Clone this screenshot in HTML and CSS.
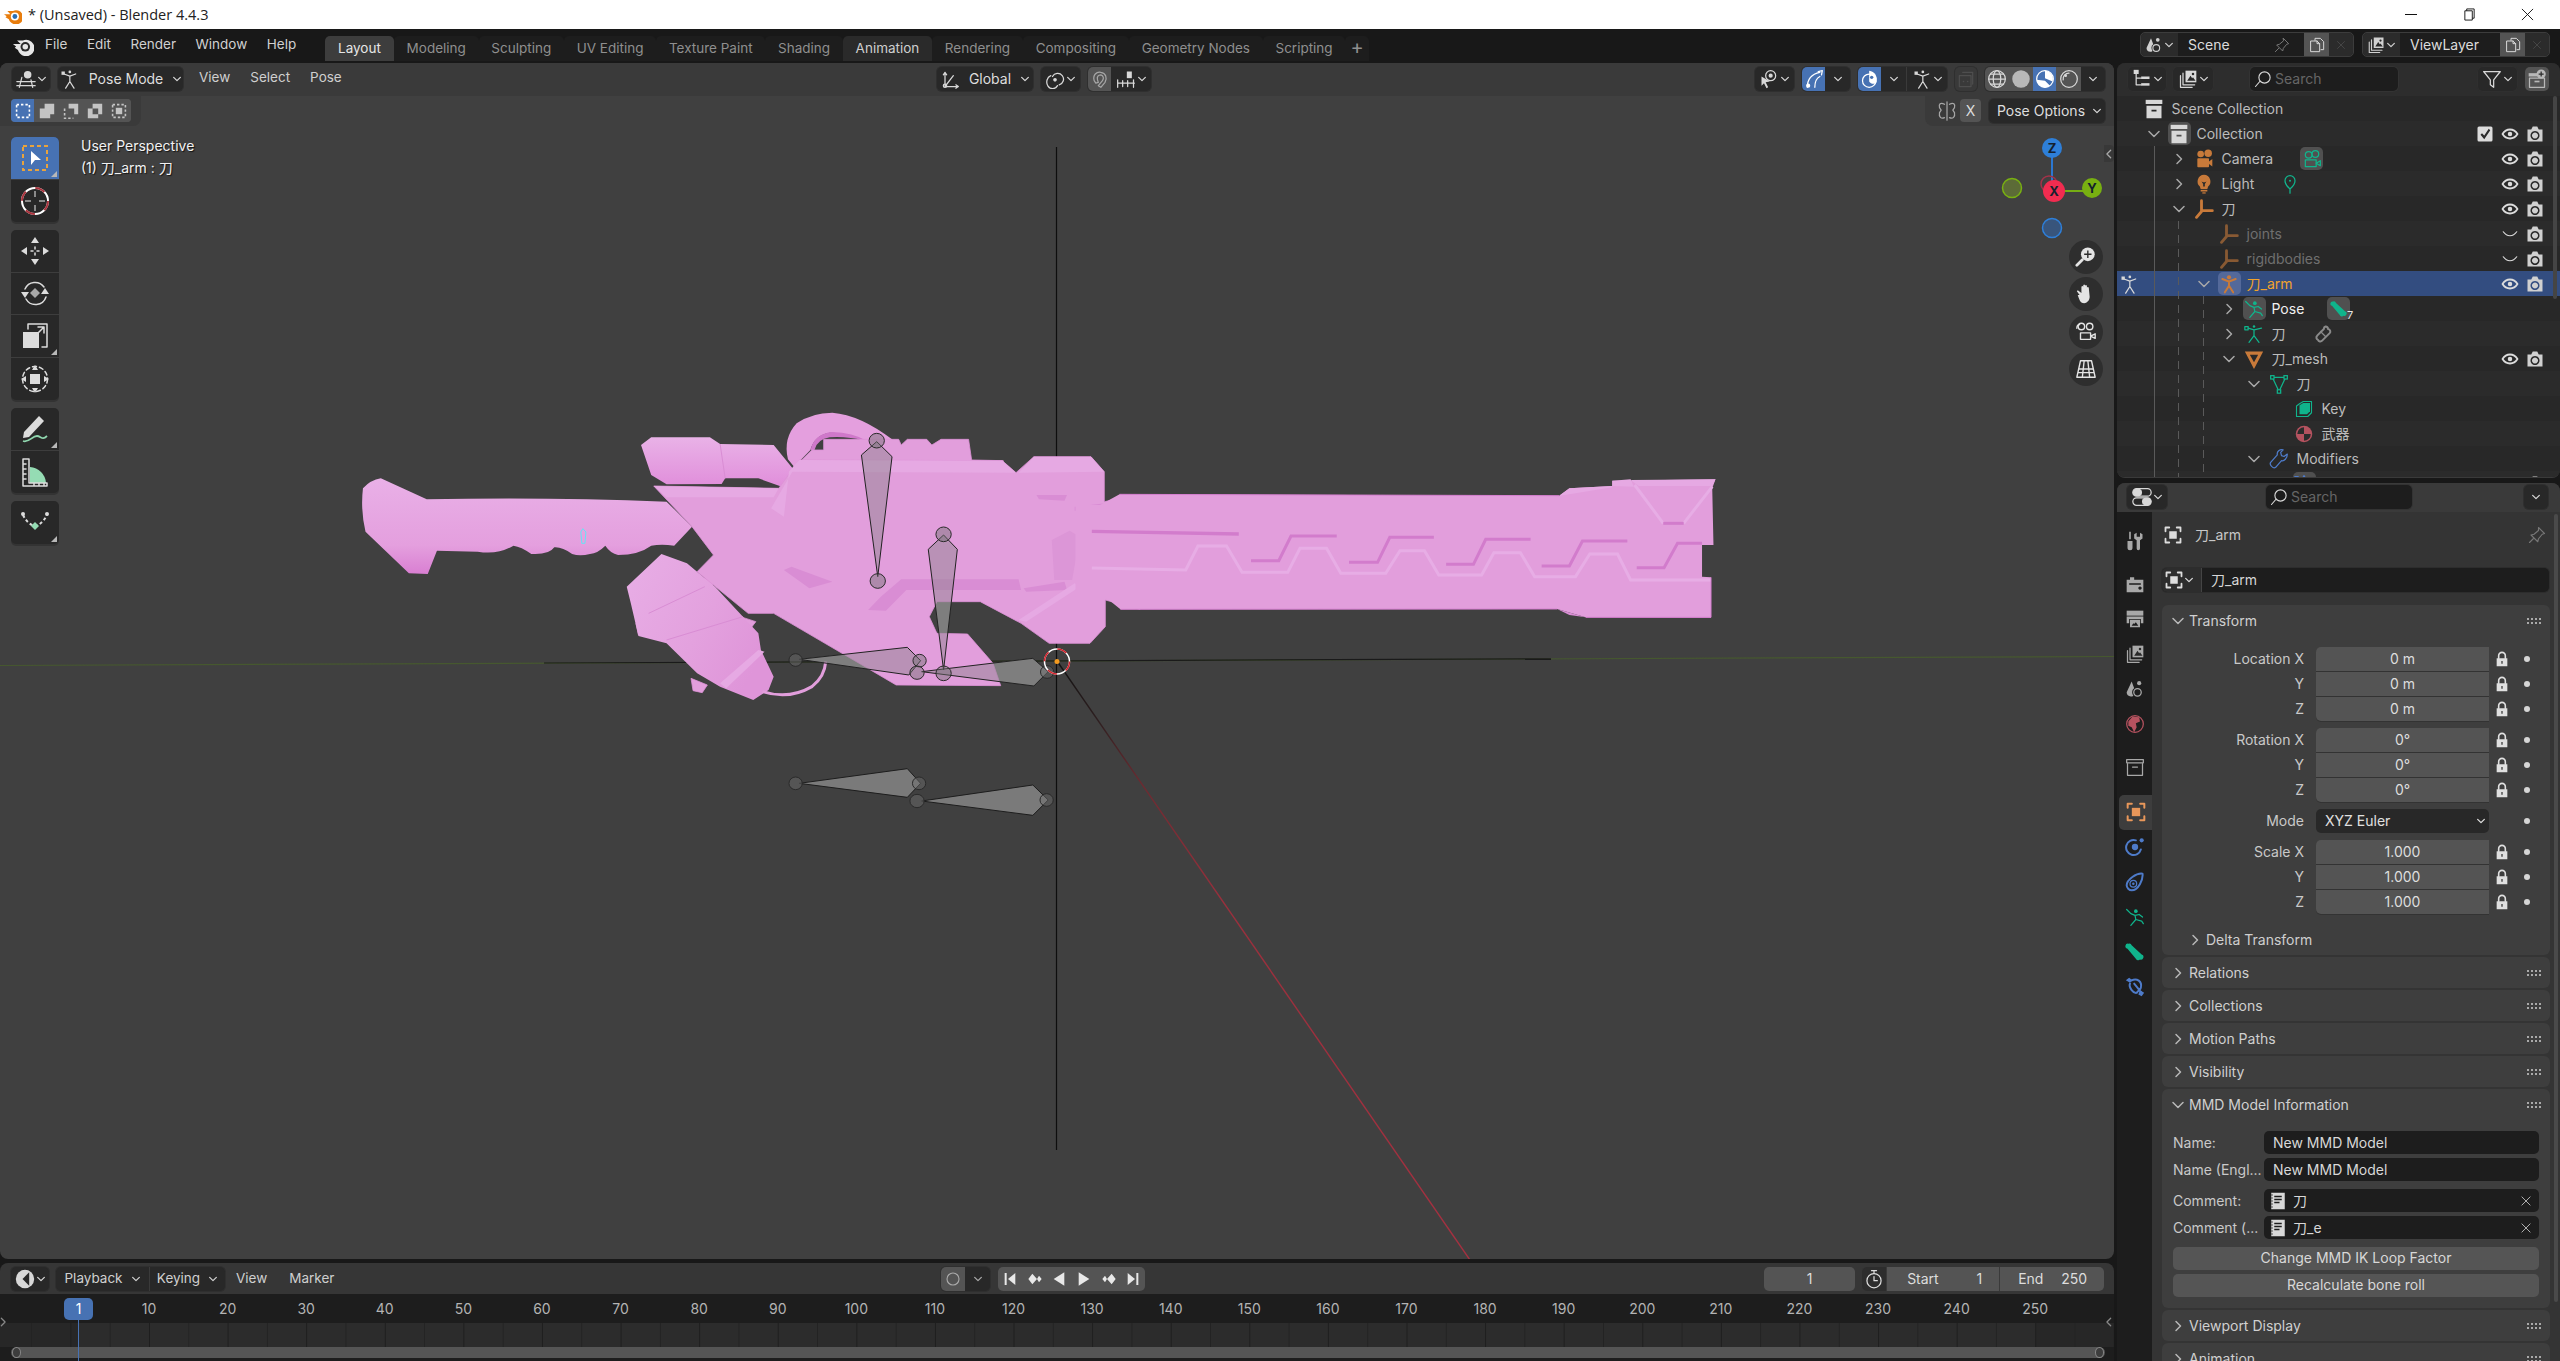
FILE: index.html
```html
<!DOCTYPE html>
<html lang="en">
<head>
<meta charset="utf-8">
<title>Blender 4.4.3</title>
<link rel="stylesheet" href="styles.css">
</head>
<body>
<svg class="sprite" aria-hidden="true">
<symbol id="logo" viewBox="0 0 24 24"><path class="f" d="M1 11h8.500L5.500 7h6.500a9 9 0 1 1-3 14.500 8 8 0 0 1-2.500-4L3 15l1.500-1.500z"/><circle class="cut" cx="14.500" cy="14" r="5.200"/><circle class="f" cx="14.500" cy="14" r="3"/></symbol>
<symbol id="tlogo" viewBox="0 0 24 24"><path class="o" d="M0 11h8.500L4.500 6.500h7.500a9.500 9.500 0 1 1-3 15 8 8 0 0 1-2.500-4L2 15l1.500-1.500z"/><circle class="w" cx="14.500" cy="14" r="5.400"/><circle class="b" cx="14.500" cy="14" r="3.200"/></symbol>
<symbol id="chd" viewBox="0 0 12 12"><path class="s" d="M2 4l4 4 4-4"/></symbol>
<symbol id="chr" viewBox="0 0 12 12"><path class="s" d="M4 1.500l4.500 4.500-4.500 4.500"/></symbol>
<symbol id="chdl" viewBox="0 0 12 12"><path class="s" d="M1 3.500l5 5 5-5"/></symbol>
<symbol id="v3d" viewBox="0 0 24 24"><circle class="f" cx="14" cy="7" r="4.500"/><path class="s" d="M7 10L4 22M18 13l2 9M1 15h22M1 20h22"/></symbol>
<symbol id="man" viewBox="0 0 24 24"><rect class="f" x="3" y="3" width="4" height="4"/><circle class="f" cx="13" cy="3.500" r="1.600"/><path class="s" d="M6 6l7 2.500 7-2.500M13 8.500V15M13 15l-5 8M13 15l5 8"/></symbol>
<symbol id="mnew" viewBox="0 0 20 20"><rect class="sd" x="2" y="2" width="16" height="16"/></symbol>
<symbol id="munion" viewBox="0 0 20 20"><path class="f" d="M7 1h12v13h-5v5H1V7h6z"/></symbol>
<symbol id="msub" viewBox="0 0 20 20"><path class="f" d="M7 1h12v13h-5V7H7z"/><path class="sd" d="M2 7v12h11"/></symbol>
<symbol id="mdiff" viewBox="0 0 20 20"><path class="f fe" d="M7 1h12v13h-5v5H1V7h6zM7 7v7h7V7z"/></symbol>
<symbol id="mint" viewBox="0 0 20 20"><rect class="sd" x="2" y="2" width="16" height="16"/><rect class="f" x="6" y="6" width="8" height="8"/></symbol>
<symbol id="global" viewBox="0 0 24 24"><path class="s" d="M6 21V4M4 7l2-3 2 3M6 21h16M19 19l3 2-3 2M6 21L16 8"/><circle class="s" cx="6" cy="20" r="2"/></symbol>
<symbol id="prop" viewBox="0 0 24 24"><path class="s" d="M9 9a7 7 0 1 1 8 10M7 8a7 8 0 1 0 8 12"/><circle class="f" cx="12" cy="13" r="2.200"/></symbol>
<symbol id="magnet" viewBox="0 0 24 24"><path class="s" d="M5 14c-2-7 3-11 8-10 6 1 8 7 5 12l-5 6-3-2 5-6c2-3 1-6-2-7-3 0-5 2-4 6l1 3-3 1z"/></symbol>
<symbol id="snap" viewBox="0 0 24 24"><rect class="f" x="13" y="3" width="6" height="8"/><path class="s" d="M2 13v9M2 17h20M8 14v7M14 14v7M21 13v9"/></symbol>
<symbol id="objgz" viewBox="0 0 24 24"><circle class="s" cx="14" cy="8" r="6"/><circle class="f" cx="14" cy="8" r="2.500"/><path class="f" d="M3 9l10 6-5 1 3 6-2 1-3-6-3 3z"/></symbol>
<symbol id="gizmo" viewBox="0 0 24 24"><path class="s" d="M4 22c0-9 5-16 15-18M13 22c0-7 2-11 6-13M17 3l5-1-1 5"/><circle class="f" cx="5" cy="20" r="2.500"/></symbol>
<symbol id="overlay" viewBox="0 0 24 24"><circle class="s" cx="11" cy="14" r="8"/><path class="f" d="M11 2a11 11 0 0 1 9 14c-3 3-7 2-9-1z"/><circle class="cutb" cx="14" cy="10" r="2"/></symbol>
<symbol id="xray" viewBox="0 0 24 24"><path class="s" d="M8 4h12v14M4 8h14v13H4z"/><circle class="f" cx="9" cy="15" r="1"/><circle class="f" cx="14" cy="15" r="1"/></symbol>
<symbol id="wire" viewBox="0 0 24 24"><circle class="s" cx="12" cy="12" r="10"/><ellipse class="s" cx="12" cy="12" rx="4.500" ry="10"/><path class="s" d="M2 12h20M4 6h16M4 18h16"/></symbol>
<symbol id="solid" viewBox="0 0 24 24"><circle class="f" cx="12" cy="12" r="10.500"/></symbol>
<symbol id="mat" viewBox="0 0 24 24"><circle class="s" cx="12" cy="12" r="10"/><path class="f" d="M12 2a10 10 0 0 1 9 13l-9-4z"/><path class="f" d="M2 13l10 1 6 6a10 10 0 0 1-16-7z"/></symbol>
<symbol id="rend" viewBox="0 0 24 24"><circle class="s" cx="12" cy="12" r="10"/><path class="s" d="M5 13a7 7 0 0 1 7-8"/><circle class="f" cx="8" cy="8" r="1.600"/></symbol>
<symbol id="zoomi" viewBox="0 0 24 24"><circle class="f" cx="14" cy="9" r="7.500"/><path class="ln" d="M14 5v8M10 9h8"/><path class="sb" d="M8 15l-6 6"/></symbol>
<symbol id="hand" viewBox="0 0 24 24"><path class="f" d="M5 13L2 9l1-1 4 3V4a1.200 1.200 0 0 1 2 0v6V2.500a1.200 1.200 0 0 1 2 0V10V3a1.200 1.200 0 0 1 2 0v7V5a1.200 1.200 0 0 1 2 0l1 10c0 4-3 7-6 7-4 0-5-3-7-9z"/></symbol>
<symbol id="camv" viewBox="0 0 24 24"><circle class="s" cx="7" cy="6" r="3.500"/><circle class="s" cx="16" cy="6" r="3.500"/><path class="s" d="M2 8c0-2 1-4 3-4M6 13h11v7H6zM22 14v5l-5-2.500z"/></symbol>
<symbol id="gridv" viewBox="0 0 24 24"><path class="s" d="M6 3h12l4 18H2zM4 12h16M3 16h18M10 3l-2 18M14 3l2 18"/></symbol>
<symbol id="tsel" viewBox="0 0 30 30"><rect class="sdo" x="3" y="3" width="24" height="24"/><path class="f" d="M11 8l10 9h-6l-4 5z"/></symbol>
<symbol id="tcur" viewBox="0 0 30 30"><circle class="rw" cx="15" cy="15" r="13"/><circle class="rr" cx="15" cy="15" r="13"/><path class="sg" d="M15 5v6M15 19v6M5 15h6M19 15h6"/></symbol>
<symbol id="tmov" viewBox="0 0 30 30"><path class="f" d="M15 1l4 6h-8zM15 29l-4-6h8zM1 15l6-4v8zM29 15l-6 4v-8z"/><path class="s" d="M15 11v2M15 17v2M11 15h2M17 15h2"/></symbol>
<symbol id="trot" viewBox="0 0 30 30"><path class="s" d="M5 11a11 11 0 0 1 19-2M26 19a11 11 0 0 1-20 2"/><path class="f" d="M1 14h8l-4 6zM29 16h-8l4-6z"/><path class="fg" d="M15 10l5 5-5 5-5-5z"/></symbol>
<symbol id="tscl" viewBox="0 0 30 30"><rect class="f" x="3" y="11" width="16" height="16"/><path class="s" d="M8 8V3h19v23h-5M14 16l10-10M18 6h6v6"/></symbol>
<symbol id="txf" viewBox="0 0 30 30"><rect class="f" x="10" y="10" width="10" height="10"/><circle class="s d2" cx="15" cy="15" r="12.500"/><path class="f" d="M15 1l3 5h-6zM15 29l-3-5h6zM1 15l5-3v6zM29 15l-5 3v-6z"/></symbol>
<symbol id="tann" viewBox="0 0 30 30"><path class="f" d="M4 18L19 2l5 5L9 23l-6 1z"/><path class="sgr" d="M3 27c6 2 9-5 14-5 4 0 5 5 10 0"/></symbol>
<symbol id="tmea" viewBox="0 0 30 30"><path class="fgr" d="M10 10a17 17 0 0 1 16 16H10z"/><path class="s" d="M3 2h6v24h18v3H3zM3 7h3M3 12h3M3 17h3M3 22h3M14 29v-3M19 29v-3M24 29v-3"/></symbol>
<symbol id="tbend" viewBox="0 0 30 30"><path class="sd" d="M3 8c3 6 7 10 12 11 5-1 9-5 12-11"/><circle class="f" cx="3" cy="7" r="2"/><circle class="f" cx="27" cy="7" r="2"/><path class="fgr" d="M15 15l4 4-4 4-4-4z"/></symbol>
<symbol id="scene" viewBox="0 0 24 24"><path class="f" d="M8 3L2 16c0 3 2 5 5 5 2 0 3-1 3-1-2-3-2-7 1-9z"/><circle class="s" cx="15" cy="16" r="4.500"/><circle class="f" cx="17" cy="5" r="2.500"/></symbol>
<symbol id="vlayer" viewBox="0 0 24 24"><path class="s" d="M3 8v14h14M6 5v14h14"/><rect class="f" x="9" y="2" width="13" height="14"/><path class="cutp" d="M11 14l4-6 2 3 1-1 3 4z"/><circle class="cut" cx="18" cy="6" r="1.500"/></symbol>
<symbol id="copy" viewBox="0 0 24 24"><path class="s" d="M9 5V2h8l5 5v12h-4M3 6h9l4 4v12H3zM12 6v4h4"/></symbol>
<symbol id="xx" viewBox="0 0 24 24"><path class="s" d="M5 5l14 14M19 5L5 19"/></symbol>
<symbol id="pin" viewBox="0 0 24 24"><path class="s" d="M14 2l8 8-3 1-5 6-1 4-9-9 4-1 6-5zM7 17l-5 5"/></symbol>
<symbol id="dmode" viewBox="0 0 24 24"><rect class="f" x="2" y="1" width="6" height="5"/><rect class="f" x="11" y="9" width="10" height="3"/><rect class="f" x="11" y="17" width="10" height="3"/><path class="s" d="M5 6v13h6M5 11h6"/></symbol>
<symbol id="search" viewBox="0 0 24 24"><circle class="s" cx="14" cy="10" r="7.500"/><path class="s" d="M8 15l-6 7"/></symbol>
<symbol id="filter" viewBox="0 0 24 24"><path class="s" d="M2 3h20l-8 10v9l-4-3v-6z"/></symbol>
<symbol id="newcol" viewBox="0 0 24 24"><path class="s" d="M3 11h18v11H3z"/><rect class="f" x="2" y="5" width="14" height="4"/><rect class="f" x="9" y="14" width="6" height="2"/><circle class="f" cx="17" cy="6" r="5.500"/><path class="ln" d="M17 3v6M14 6h6"/></symbol>
<symbol id="coll" viewBox="0 0 24 24"><rect class="f" x="2" y="1" width="20" height="5"/><path class="f fe" d="M3 8h18v15H3zM9 13v2h6v-2z"/></symbol>
<symbol id="camo" viewBox="0 0 24 24"><circle class="f" cx="8" cy="6" r="4"/><circle class="f" cx="17" cy="5" r="4.500"/><rect class="f" x="4" y="11" width="14" height="11" rx="1"/><path class="f" d="M22 12v9l-4-3v-3z"/></symbol>
<symbol id="camd" viewBox="0 0 24 24"><circle class="s" cx="8" cy="7" r="4"/><circle class="s" cx="16" cy="6" r="4"/><rect class="s" x="4" y="13" width="13" height="8"/><path class="s" d="M22 14v6l-5-3z"/></symbol>
<symbol id="bulb" viewBox="0 0 24 24"><path class="f fe" d="M12 1a8 8 0 0 1 5 14l-1 3H8l-1-3A8 8 0 0 1 12 1zM9 9l2 3v3h2v-3l2-3-2 1h-2z"/><rect class="f" x="8" y="19" width="8" height="2"/><rect class="f" x="10" y="22" width="4" height="1.500"/></symbol>
<symbol id="lightd" viewBox="0 0 24 24"><path class="s" d="M12 2a6 6 0 0 1 6 6c0 5-4 8-6 10-2-2-6-5-6-10a6 6 0 0 1 6-6zM12 18v5"/><circle class="f" cx="12" cy="8" r="1.200"/></symbol>
<symbol id="empty" viewBox="0 0 24 24"><path class="sth3" d="M9 2v13M9 15L3 22M9 14h13"/></symbol>
<symbol id="armo" viewBox="0 0 24 24"><circle class="f" cx="12" cy="4" r="2.500"/><path class="sth" d="M4 6l8 3 8-3M12 9v6M12 14l-5 8M12 14l5 8"/></symbol>
<symbol id="posed" viewBox="0 0 24 24"><circle class="f" cx="13" cy="5" r="2.200"/><path class="s" d="M2 3l5 5 5 2 5-1 4 3M12 10l1 5-6 7M13 15l7 2 2 3"/></symbol>
<symbol id="bone" viewBox="0 0 24 24"><path class="f" d="M4 2a3 3 0 0 1 4 2l12 11a3 3 0 1 1-2 6 3 3 0 0 1-5-1L3 8a3 3 0 0 1 1-6z"/></symbol>
<symbol id="bonel" viewBox="0 0 24 24"><path class="sth" d="M15 3a3 3 0 0 1 3 3 3 3 0 0 1 2 5l-9 9a3 3 0 0 1-5-1 3 3 0 0 1-1-5l8-8a3 3 0 0 1 2-3z"/><path class="s" d="M9 9l6 6"/></symbol>
<symbol id="armd" viewBox="0 0 24 24"><rect class="s" x="1" y="3" width="4" height="4"/><circle class="f" cx="12" cy="3" r="1.500"/><path class="s" d="M5 5l7 2 9-2M12 7v7M12 14l-6 8M12 14l6 8"/></symbol>
<symbol id="mesho" viewBox="0 0 24 24"><path class="f fe" d="M1 3h22L12 24zM7 7l5 9 5-9z"/></symbol>
<symbol id="meshd" viewBox="0 0 24 24"><path class="s" d="M4 4h16L12 21z"/><rect class="ff" x="2" y="2" width="4" height="4"/><rect class="ff" x="18" y="2" width="4" height="4"/><rect class="ff" x="10" y="19" width="4" height="4"/></symbol>
<symbol id="key" viewBox="0 0 24 24"><path class="s" d="M6 5l5-3h11v15l-5 5H2V8z"/><path class="f" d="M6 7l5-3h9v11l-4 4H6z"/></symbol>
<symbol id="mtl" viewBox="0 0 24 24"><circle class="f" cx="12" cy="12" r="11"/><path class="wd" d="M12 3v9H3a9 9 0 0 1 9-9zM12 12h9a9 9 0 0 1-9 9z"/></symbol>
<symbol id="wrench" viewBox="0 0 24 24"><path class="s" d="M22 6l-4 3-3-1-1-4 3-3c-4-1-8 2-7 6L2 16c-2 3 3 8 6 6l7-8c3 1 7-3 7-8z"/></symbol>
<symbol id="eye" viewBox="0 0 24 24"><path class="sth" d="M2 12c5-8 15-8 20 0-5 8-15 8-20 0z"/><circle class="f" cx="12" cy="12" r="3"/></symbol>
<symbol id="eyec" viewBox="0 0 24 24"><path class="s" d="M3 9c5 7 13 7 18 0"/></symbol>
<symbol id="rcam" viewBox="0 0 24 24"><path class="f fe" d="M2 6h5l2-4h6l2 4h5v16H2zM12 8a6 6 0 1 0 .01 0zM12 10a4 4 0 1 1-.01 0z"/></symbol>
<symbol id="chk" viewBox="0 0 24 24"><path class="f fe" d="M4 2h16a2 2 0 0 1 2 2v16a2 2 0 0 1-2 2H4a2 2 0 0 1-2-2V4a2 2 0 0 1 2-2zM17 5l-6 9-3-3-2 2 5 6 8-12z"/></symbol>
<symbol id="toggle" viewBox="0 0 24 24"><rect class="s" x="1" y="2" width="22" height="9" rx="4.500"/><rect class="f" x="1" y="2" width="11" height="9" rx="4.500"/><rect class="s" x="1" y="13" width="22" height="9" rx="4.500"/><rect class="f" x="12" y="13" width="11" height="9" rx="4.500"/></symbol>
<symbol id="tool" viewBox="0 0 24 24"><path class="f" d="M5 1h2v9H5zM3 12h6v8a3 3 0 0 1-6 0zM14 2v5h2V7h2V2l3 2v5l-3 2v10a2 2 0 0 1-4 0V11l-3-2V4z"/></symbol>
<symbol id="rendert" viewBox="0 0 24 24"><path class="f fe" d="M2 7h4V4h5v3h11v15H2zM5 11v2h14v-2zM18 15a2 2 0 1 0 .01 0z"/></symbol>
<symbol id="output" viewBox="0 0 24 24"><rect class="f" x="2" y="2" width="20" height="6"/><path class="f fe" d="M2 9h20v8h-3v-5H5v5H2zM6 13h12v9H6zM8 20h8l-3-4-2 2-1-1z"/></symbol>
<symbol id="world" viewBox="0 0 24 24"><circle class="s" cx="12" cy="12" r="10"/><path class="f" d="M4 9l5-6 8 1 1 5-5 2 1 5-3 6-3-6-4-2z"/></symbol>
<symbol id="colt" viewBox="0 0 24 24"><rect class="s" x="2" y="3" width="20" height="4"/><path class="s" d="M3 8v14h18V8M9 12h6"/></symbol>
<symbol id="obj" viewBox="0 0 24 24"><rect class="f" x="7" y="7" width="10" height="10"/><path class="sth" d="M2 7V2h5M17 2h5v5M22 17v5h-5M7 22H2v-5"/></symbol>
<symbol id="phys" viewBox="0 0 24 24"><path class="sth" d="M19 15a9 9 0 1 1-6-11"/><circle class="f" cx="12" cy="12" r="3.800"/><circle class="f" cx="20" cy="4" r="2.500"/></symbol>
<symbol id="cons" viewBox="0 0 24 24"><path class="sth" d="M2 16c0-7 12-15 19-14 1 7-5 20-13 20-3 0-6-3-6-6z"/><circle class="s" cx="10" cy="14" r="4"/><circle class="f" cx="10" cy="14" r="1.500"/></symbol>
<symbol id="bcons" viewBox="0 0 24 24"><path class="f" d="M1 4l4-3 4 3-3 3zM18 16l5 3-3 4-4-2z"/><path class="sth" d="M8 4c6-3 13 1 11 9 0 2-3 3-5 6-4 1-10-7-8-11M11 8l9 11"/></symbol>
<symbol id="lock" viewBox="0 0 24 24"><path class="f fe" d="M4 11h16v12H4zM11 15v4h2v-4z"/><path class="sth" d="M7 11V7a5 5 0 0 1 10 0v4"/></symbol>
<symbol id="note" viewBox="0 0 24 24"><path class="f fe" d="M3 1h18v22H3zM7 5v2h10V5zM7 9v2h10V9zM7 13v2h7v-2z"/><path class="ln" d="M3 4h2M3 8h2M3 12h2M3 16h2M3 20h2"/></symbol>
<symbol id="clockt" viewBox="0 0 24 24"><circle class="f" cx="12" cy="12" r="11"/><path class="cutp" d="M17 4L9 12l8 8z"/></symbol>
<symbol id="rec" viewBox="0 0 24 24"><circle class="s" cx="12" cy="12" r="8"/></symbol>
<symbol id="jstart" viewBox="0 0 24 24"><rect class="f" x="4" y="3" width="3" height="18"/><path class="f" d="M20 3v18L9 12z"/></symbol>
<symbol id="kprev" viewBox="0 0 24 24"><path class="f" d="M8 4l7 8-7 8-6-8zM18 7l4 5-4 5-3-5z"/></symbol>
<symbol id="pback" viewBox="0 0 24 24"><path class="f" d="M20 2v20L4 12z"/></symbol>
<symbol id="pplay" viewBox="0 0 24 24"><path class="f" d="M4 2v20l16-10z"/></symbol>
<symbol id="knext" viewBox="0 0 24 24"><path class="f" d="M16 4l-7 8 7 8 6-8zM6 7l-4 5 4 5 3-5z"/></symbol>
<symbol id="jend" viewBox="0 0 24 24"><rect class="f" x="17" y="3" width="3" height="18"/><path class="f" d="M4 3v18l11-9z"/></symbol>
<symbol id="watch" viewBox="0 0 24 24"><circle class="s" cx="12" cy="14" r="8.500"/><path class="s" d="M9 2h6M12 2v3M12 9v5h4"/></symbol>
<symbol id="mirror" viewBox="0 0 24 24"><path class="s" d="M12 1v22M9 4C4 1 2 4 3 8l2 3-2 3c-1 5 2 8 6 6M15 4c5-3 7 0 6 4l-2 3 2 3c1 5-2 8-6 6" /></symbol>
<symbol id="wmax" viewBox="0 0 14 14"><path class="s1" d="M4 3V1h8v10h-2M2 3h8v10H2z"/></symbol>
<symbol id="wclose" viewBox="0 0 14 14"><path class="s1" d="M1 1l12 12M13 1L1 13"/></symbol>
</svg>

<header class="titlebar">
  <svg class="ttl-logo"><use href="#tlogo"/></svg>
  <span class="ttl-text">* (Unsaved) - Blender 4.4.3</span>
  <div class="winctl">
    <span class="wbtn"><i class="wmin"></i></span>
    <span class="wbtn"><svg class="wic"><use href="#wmax"/></svg></span>
    <span class="wbtn"><svg class="wic"><use href="#wclose"/></svg></span>
  </div>
</header>

<div class="app">
  <nav class="topbar">
    <svg class="ic22 top-logo"><use href="#logo"/></svg>
    <div class="topmenu"><span>File</span><span>Edit</span><span>Render</span><span>Window</span><span>Help</span></div>
    <div class="tabs">
      <span class="tab on">Layout</span><span class="tab">Modeling</span><span class="tab">Sculpting</span><span class="tab">UV Editing</span><span class="tab">Texture Paint</span><span class="tab">Shading</span><span class="tab hov">Animation</span><span class="tab">Rendering</span><span class="tab">Compositing</span><span class="tab">Geometry Nodes</span><span class="tab">Scripting</span><span class="tab plus">+</span>
    </div>
    <div class="selectors">
      <div class="sel sel-scene">
        <span class="sel-ic"><svg class="ic18"><use href="#scene"/></svg><svg class="ic10"><use href="#chd"/></svg></span>
        <span class="sel-name">Scene</span><svg class="ic16 dim sel-pin"><use href="#pin"/></svg>
        <span class="sel-b"><svg class="ic16"><use href="#copy"/></svg></span><span class="sel-x"><svg class="ic12"><use href="#xx"/></svg></span>
      </div>
      <div class="sel sel-vl">
        <span class="sel-ic"><svg class="ic18"><use href="#vlayer"/></svg><svg class="ic10"><use href="#chd"/></svg></span>
        <span class="sel-name">ViewLayer</span>
        <span class="sel-b"><svg class="ic16"><use href="#copy"/></svg></span><span class="sel-x"><svg class="ic12"><use href="#xx"/></svg></span>
      </div>
    </div>
  </nav>

  <div class="workspace">
    <div class="leftcol">
      <main class="viewport">
        <svg class="scene3d" viewBox="0 63 2114 1196">
          <defs>
            <linearGradient id="redax" gradientUnits="userSpaceOnUse" x1="1057" y1="661" x2="1470" y2="1260"><stop offset="0" stop-color="#111"/><stop offset=".1" stop-color="#2e1f20"/><stop offset=".2" stop-color="#6a2a30"/><stop offset=".4" stop-color="#9a2f3c"/><stop offset="1" stop-color="#a63040"/></linearGradient>
            <linearGradient id="grip" x1="0" y1="0" x2="0" y2="1"><stop offset="0" stop-color="#e9b0e7"/><stop offset=".7" stop-color="#e49fde"/><stop offset="1" stop-color="#d97fd2"/></linearGradient>
            <linearGradient id="gtop" x1="0" y1="0" x2="0" y2="1"><stop offset="0" stop-color="#e9b2e7"/><stop offset="1" stop-color="#e08cda"/></linearGradient>
            <linearGradient id="can" x1="0" y1="0" x2="1" y2=".55"><stop offset="0" stop-color="#e8aee6"/><stop offset=".6" stop-color="#e3a1de"/><stop offset="1" stop-color="#df95d9"/></linearGradient>
          </defs>
          <path class="ax-g" d="M0 665.500L2114 656.500"/>
          <path class="ax-k" d="M544 663L1551 658.800"/>
          <path class="ax-r" d="M1057 661L1470 1260"/>
          <path class="ax-v" d="M1056.500 147V1150"/>
          <g class="z7">
            <polygon class="bs" points="900,778 1112,742 1138,782 1115,825"/>
            <polygon class="bs" points="1140,815 1358,775 1388,815 1360,858"/>
            <polygon class="bs" points="1183,405 1210,448 1183,810 1153,448"/>
          </g>
          <g class="z7">
            <path class="gripc" d="M878,178 Q868,115 895,70 Q925,38 965,38 Q1020,45 1082,118 L1090,140 1040,140 Q1010,100 960,98 Q930,105 922,150 L890,200z"/>
            <path class="ring2" d="M922 150Q930 100 965 96Q1005 98 1032 122Q990 108 960 112Q935 118 930 150z"/>
            <path class="pk-t" d="M590,135 610,112 725,112 745,132 850,135 895,220 880,268 820,235 755,235 748,252 640,253 610,225z"/>
            <path class="ln7" d="M745 132L755 235"/>
            <path class="pk" d="M948,150 948,118 1095,118 1100,135 1112,118 1150,118 1160,135 1178,118 1232,118 1238,180 1300,182 1300,200 920,200 905,180 925,150z"/>
            <path class="pk-g" d="M45,265 Q60,240 80,235 L170,298 Q400,290 640,305 L690,380 655,437 Q630,432 610,437 Q585,465 545,465 Q530,460 520,437 Q505,460 490,462 Q470,470 455,462 Q435,440 420,442 Q410,465 375,462 Q355,440 340,437 Q310,465 270,455 L190,452 172,522 135,520 50,395 Q40,330 45,265z"/>
            <path class="pk" d="M580,670 610,690 605,710 585,705z"/>
            <path class="pk" d="M700,530 735,545 720,570 705,545z"/>
            <path class="pk" d="M785,650 815,665 800,695 785,675z"/>
            <path class="pk" d="M688,835 720,855 710,878 692,872z"/>
            <path class="pk-c" d="M562,560 630,462 680,490 735,560 820,700 825,750 850,830 840,870 810,900 745,860 700,820 640,730 585,708 570,610z"/>
            <path class="ln7" d="M605 640L715 560M640 720L790 650"/>
            <path class="lt" d="M745 850L820 750 832 755 757 865z"/>
            <path class="wire" d="M828 875Q880 900 925 860Q950 830 952 785"/>
            <path class="pk" d="M615,258 860,265 900,180 1298,182 1325,218 1360,170 1472,170 1498,215 1498,305 1568,285 1568,628 1500,600 1500,680 1470,730 1390,730 1335,670 1255,605 1170,605 1155,650 1170,700 1230,702 1280,790 1295,857 1090,855 1040,810 850,640 800,640 700,515 732,465 690,380z"/>
            <path class="lt" d="M900,180 1298,182 1325,218 880,215z"/>
            <path class="lt" d="M900,180 880,215 870,350 845,325z"/>
            <path class="lt" d="M615,258 860,265 850,292 640,292z"/>
            <path class="dk" d="M1060,590 1100,538 1330,538 1335,570 1110,570 1070,632 1035,630z"/>
            <path class="dk" d="M1340,565 1420,545 1425,570 1345,575z"/>
            <path class="dk3" d="M1395,420 1430,392 1450,410 1435,540 1400,540z"/>
            <path class="dk" d="M885,500 965,545 920,565 870,510z"/>
            <path class="lt" d="M1360,170 1472,170 1498,215 1330,218z"/>
            <path class="dk" d="M1365,285 1425,285 1420,302 1370,298z"/>
            <path class="dk" d="M1440,320 1500,310 1475,335 1440,332z"/>
            <path class="lt" d="M1330,660 1440,550 1450,560 1345,665z"/>
          </g>
          <g class="z8">
            <path class="pk-b" d="M0,195 48,163 1125,167 1150,145 1255,138 1255,122 1508,118 1500,145 1503,315 1475,315 1475,410 1497,412 1497,533 1190,532 1120,507 50,508 12,470 -60,470 -60,195z"/>
            <path class="lt" d="M1300,120 1508,118 1500,138 1320,138z"/>
            <path class="lt" d="M1255,122 1300,118 1308,140 1255,138z"/>
            <path class="lt" d="M1125,167 1150,145 1255,138 1255,142 1165,160z"/>
            <path class="str-l" d="M1310 135L1380 250M1430 250L1500 140"/>
            <path class="str-d" d="M1380 250H1430"/>
            <path class="str-d2" d="M-20 274L340 282"/>
            <path class="str-d" d="M370 362H438L468 288H580M610 367H680L710 292H818M848 373H915L945 298H1055M1082 378H1150L1182 303H1292M1315 383H1382L1415 310H1475"/>
            <path class="str-l" d="M-20 384L210 390 240 318H310L348 397H460L490 325H555L590 400H700L735 332H795L830 405H935L965 338H1030L1065 410H1165L1200 342H1268L1300 420H1497"/>
            <path class="edge" d="M48 163L1125 167M50 508L1120 507M1190 532H1497V412"/>
            <path class="dk" d="M1120,507 1190,532 1150,525z"/>
          </g>
          <g class="z7">
            <polygon class="bo" points="1052,125 1082,170 1054,530 1022,165"/>
            <ellipse class="jt" cx="1052" cy="122" rx="15" ry="22"/><ellipse class="jt" cx="1054" cy="543" rx="15" ry="22"/>
            <polygon class="bo" points="1183,405 1210,448 1183,810 1153,448"/>
            <ellipse class="jt" cx="1183" cy="403" rx="15" ry="22"/>
            <polygon class="bo" points="900,778 1112,742 1138,782 1115,825"/>
            <ellipse class="jt" cx="893" cy="780" rx="13" ry="19"/><ellipse class="jt" cx="1136" cy="782" rx="13" ry="19"/>
            <polygon class="bo" points="1140,815 1358,775 1388,815 1360,858"/>
            <ellipse class="jt" cx="1131" cy="818" rx="14" ry="20"/><ellipse class="jt" cx="1183" cy="820" rx="15" ry="22"/><ellipse class="jt" cx="1386" cy="816" rx="13" ry="19"/>
            <polygon class="bs2" points="900,1150 1112,1106 1138,1150 1112,1192"/>
            <ellipse class="jt" cx="893" cy="1150" rx="13" ry="19"/><ellipse class="jt" cx="1135" cy="1150" rx="13" ry="19"/>
            <polygon class="bs2" points="1140,1203 1358,1155 1388,1200 1358,1246"/>
            <ellipse class="jt" cx="1131" cy="1203" rx="14" ry="20"/><ellipse class="jt" cx="1385" cy="1200" rx="13" ry="19"/>
            <path class="cy" d="M476 386L482 396 480 430H474L472 396z"/>
          </g>
          <circle class="cur-w" cx="1057" cy="661.500" r="12.500"/>
          <circle class="cur-r" cx="1057" cy="661.500" r="12.500"/>
          <circle class="cur-o" cx="1057" cy="661.500" r="2.500"/>
          <g class="giz">
            <path class="gl-b" d="M2052 148V188"/><path class="gl-g" d="M2054 191H2092"/>
            <circle class="g-nx" cx="2049" cy="184" r="8"/>
            <circle class="g-ny" cx="2012" cy="188" r="9.500"/>
            <circle class="g-nz" cx="2052" cy="228" r="9.500"/>
            <circle class="g-z" cx="2052" cy="148" r="10"/><text class="gt" x="2052" y="153">Z</text>
            <circle class="g-y" cx="2092" cy="188" r="10"/><text class="gt" x="2092" y="193">Y</text>
            <circle class="g-x" cx="2054" cy="191" r="11"/><text class="gt" x="2054" y="196">X</text>
          </g>
        </svg>

        <div class="vhead">
          <div class="vh-left">
            <span class="btn w38"><svg class="ic20"><use href="#v3d"/></svg><svg class="ic10"><use href="#chd"/></svg></span>
            <span class="btn wmode"><svg class="ic20"><use href="#man"/></svg><span class="btxt">Pose Mode</span><svg class="ic10"><use href="#chd"/></svg></span>
            <div class="menu"><span>View</span><span>Select</span><span>Pose</span></div>
          </div>
          <div class="vh-center">
            <span class="btn wglob"><svg class="ic20"><use href="#global"/></svg><span class="btxt">Global</span><svg class="ic10"><use href="#chd"/></svg></span>
            <span class="btn wprop"><svg class="ic20"><use href="#prop"/></svg><svg class="ic10"><use href="#chd"/></svg></span>
            <span class="btn wsnap"><span class="seg lit w23"><svg class="ic20 dim2"><use href="#magnet"/></svg></span><span class="seg w40"><svg class="ic20"><use href="#snap"/></svg><svg class="ic10"><use href="#chd"/></svg></span></span>
          </div>
          <div class="vh-right">
            <span class="btn w39"><svg class="ic20"><use href="#objgz"/></svg><svg class="ic10"><use href="#chd"/></svg></span>
            <span class="btn wgz"><span class="seg act w23"><svg class="ic20"><use href="#gizmo"/></svg></span><span class="seg w25"><svg class="ic10"><use href="#chd"/></svg></span></span>
            <span class="btn wov"><span class="seg act w23"><svg class="ic20"><use href="#overlay"/></svg></span><span class="seg w25"><svg class="ic10"><use href="#chd"/></svg></span><span class="seg w41 bl"><svg class="ic20"><use href="#man"/></svg><svg class="ic10"><use href="#chd"/></svg></span></span>
            <span class="btn w22 off"><svg class="ic20"><use href="#xray"/></svg></span>
            <span class="btn wshade"><span class="seg lit w24"><svg class="ic20"><use href="#wire"/></svg></span><span class="seg lit w24"><svg class="ic20 grey"><use href="#solid"/></svg></span><span class="seg act w23"><svg class="ic20 wht"><use href="#mat"/></svg></span><span class="seg lit w25"><svg class="ic20"><use href="#rend"/></svg></span><span class="seg w24"><svg class="ic10"><use href="#chd"/></svg></span></span>
          </div>
        </div>
        <div class="vtool">
          <div class="vt-left">
            <span class="modes"><span class="m act"><svg class="ic16"><use href="#mnew"/></svg></span><span class="m"><svg class="ic16"><use href="#munion"/></svg></span><span class="m"><svg class="ic16"><use href="#msub"/></svg></span><span class="m"><svg class="ic16"><use href="#mdiff"/></svg></span><span class="m"><svg class="ic16"><use href="#mint"/></svg></span></span>
          </div>
          <div class="vt-right">
            <svg class="ic20 dim2 mir"><use href="#mirror"/></svg>
            <span class="xbtn">X</span>
            <span class="btn wpose"><span class="btxt">Pose Options</span><svg class="ic10"><use href="#chd"/></svg></span>
          </div>
        </div>

        <div class="toolbar">
          <div class="tg">
            <span class="tl act more"><svg class="ic30"><use href="#tsel"/></svg></span>
            <span class="tl"><svg class="ic30"><use href="#tcur"/></svg></span>
          </div>
          <div class="tg">
            <span class="tl"><svg class="ic30"><use href="#tmov"/></svg></span>
            <span class="tl"><svg class="ic30"><use href="#trot"/></svg></span>
            <span class="tl more"><svg class="ic30"><use href="#tscl"/></svg></span>
            <span class="tl"><svg class="ic30"><use href="#txf"/></svg></span>
          </div>
          <div class="tg">
            <span class="tl more"><svg class="ic30"><use href="#tann"/></svg></span>
            <span class="tl"><svg class="ic30"><use href="#tmea"/></svg></span>
          </div>
          <div class="tg">
            <span class="tl more"><svg class="ic30"><use href="#tbend"/></svg></span>
          </div>
        </div>
        <div class="vinfo"><div>User Perspective</div><div>(1) 刀_arm : 刀</div></div>
        <span class="sidearrow"><svg class="ic10"><use href="#chr"/></svg></span>
        <div class="navbtns">
          <span class="nav"><svg class="ic22"><use href="#zoomi"/></svg></span>
          <span class="nav"><svg class="ic22"><use href="#hand"/></svg></span>
          <span class="nav"><svg class="ic22"><use href="#camv"/></svg></span>
          <span class="nav"><svg class="ic22"><use href="#gridv"/></svg></span>
        </div>
      </main>

      <section class="timeline">
        <div class="thead">
          <span class="btn w38"><svg class="ic20"><use href="#clockt"/></svg><svg class="ic10"><use href="#chd"/></svg></span>
          <span class="btn wplay"><span class="seg w93 tx">Playback<svg class="ic10"><use href="#chd"/></svg></span><span class="seg w76 tx bl">Keying<svg class="ic10"><use href="#chd"/></svg></span></span>
          <div class="menu tmenu"><span>View</span><span>Marker</span></div>
          <span class="btn wauto"><span class="seg lit w24"><svg class="ic18"><use href="#rec"/></svg></span><span class="seg w25"><svg class="ic10"><use href="#chd"/></svg></span></span>
          <span class="trans"><span><svg class="ic16"><use href="#jstart"/></svg></span><span><svg class="ic16"><use href="#kprev"/></svg></span><span><svg class="ic16"><use href="#pback"/></svg></span><span><svg class="ic16"><use href="#pplay"/></svg></span><span><svg class="ic16"><use href="#knext"/></svg></span><span><svg class="ic16"><use href="#jend"/></svg></span></span>
          <span class="frame">1</span>
          <span class="range"><span class="rg-w"><svg class="ic20"><use href="#watch"/></svg></span><span class="rg rg-s"><b>Start</b><b>1</b></span><span class="rg rg-e"><b>End</b><b>250</b></span></span>
        </div>
        <div class="ruler">
          <span>10</span><span>20</span><span>30</span><span>40</span><span>50</span><span>60</span><span>70</span><span>80</span><span>90</span><span>100</span><span>110</span><span>120</span><span>130</span><span>140</span><span>150</span><span>160</span><span>170</span><span>180</span><span>190</span><span>200</span><span>210</span><span>220</span><span>230</span><span>240</span><span>250</span>
          <b class="curframe">1</b>
        </div>
        <div class="tracks"></div>
        <div class="hscroll"><i></i><i></i></div>
        <div class="tbottom"></div>
        <i class="playline"></i>
        <span class="t-arrow-l"><svg class="ic10"><use href="#chr"/></svg></span>
        <span class="t-arrow-r"><svg class="ic10 flip"><use href="#chr"/></svg></span>
      </section>
    </div>

    <div class="rightcol">
      <section class="outliner">
        <div class="ohead">
          <span class="btn w38"><svg class="ic20"><use href="#dmode"/></svg><svg class="ic10"><use href="#chd"/></svg></span>
          <span class="btn w40h"><svg class="ic20"><use href="#vlayer"/></svg><svg class="ic10"><use href="#chd"/></svg></span>
          <span class="search os"><svg class="ic18"><use href="#search"/></svg><em>Search</em></span>
          <span class="btn w39 ofilter"><svg class="ic20"><use href="#filter"/></svg><svg class="ic10"><use href="#chd"/></svg></span>
          <span class="btn-lit"><svg class="ic20"><use href="#newcol"/></svg></span>
        </div>
        <div class="rows">
          <div class="row"><span class="ico"><svg class="ic20"><use href="#coll"/></svg></span><span class="nm">Scene Collection</span></div>
          <div class="row alt"><span class="cv"><svg class="ic12"><use href="#chdl"/></svg></span><span class="ico box"><svg class="ic20"><use href="#coll"/></svg></span><span class="nm">Collection</span><span class="rt three"><svg class="ic18"><use href="#chk"/></svg><svg class="ic18"><use href="#eye"/></svg><svg class="ic18"><use href="#rcam"/></svg></span></div>
          <div class="row l1"><span class="cv"><svg class="ic12"><use href="#chr"/></svg></span><span class="ico or"><svg class="ic20"><use href="#camo"/></svg></span><span class="nm">Camera</span><span class="sub box tl-c sub-cam"><svg class="ic20"><use href="#camd"/></svg></span><span class="rt"><svg class="ic18"><use href="#eye"/></svg><svg class="ic18"><use href="#rcam"/></svg></span></div>
          <div class="row l1 alt"><span class="cv"><svg class="ic12"><use href="#chr"/></svg></span><span class="ico or"><svg class="ic20"><use href="#bulb"/></svg></span><span class="nm">Light</span><span class="sub tl-c sub-light"><svg class="ic20"><use href="#lightd"/></svg></span><span class="rt"><svg class="ic18"><use href="#eye"/></svg><svg class="ic18"><use href="#rcam"/></svg></span></div>
          <div class="row l1"><span class="cv"><svg class="ic12"><use href="#chdl"/></svg></span><span class="ico or"><svg class="ic20"><use href="#empty"/></svg></span><span class="nm">刀</span><span class="rt"><svg class="ic18"><use href="#eye"/></svg><svg class="ic18"><use href="#rcam"/></svg></span></div>
          <div class="row l2 alt"><span class="cv"></span><span class="ico or fade"><svg class="ic20"><use href="#empty"/></svg></span><span class="nm grey2">joints</span><span class="rt"><svg class="ic18"><use href="#eyec"/></svg><svg class="ic18"><use href="#rcam"/></svg></span></div>
          <div class="row l2"><span class="cv"></span><span class="ico or fade"><svg class="ic20"><use href="#empty"/></svg></span><span class="nm grey2">rigidbodies</span><span class="rt"><svg class="ic18"><use href="#eyec"/></svg><svg class="ic18"><use href="#rcam"/></svg></span></div>
          <div class="row l2 sel-row"><svg class="ic20 modeic"><use href="#man"/></svg><span class="cv"><svg class="ic12"><use href="#chdl"/></svg></span><span class="ico or box boxb"><svg class="ic20"><use href="#armo"/></svg></span><span class="nm orange">刀_arm</span><span class="rt"><svg class="ic18"><use href="#eye"/></svg><svg class="ic18"><use href="#rcam"/></svg></span></div>
          <div class="row l3"><span class="cv"><svg class="ic12"><use href="#chr"/></svg></span><span class="ico tl-c box"><svg class="ic20"><use href="#posed"/></svg></span><span class="nm whitey">Pose</span><span class="sub box tl-c sub-pose"><svg class="ic18"><use href="#bone"/></svg><b class="cnt">7</b></span></div>
          <div class="row l3 alt"><span class="cv"><svg class="ic12"><use href="#chr"/></svg></span><span class="ico tl-c"><svg class="ic20"><use href="#armd"/></svg></span><span class="nm">刀</span><span class="sub grey3 sub-bones"><svg class="ic20"><use href="#bonel"/></svg></span></div>
          <div class="row l3"><span class="cv"><svg class="ic12"><use href="#chdl"/></svg></span><span class="ico or"><svg class="ic20"><use href="#mesho"/></svg></span><span class="nm">刀_mesh</span><span class="rt"><svg class="ic18"><use href="#eye"/></svg><svg class="ic18"><use href="#rcam"/></svg></span></div>
          <div class="row l4 alt"><span class="cv"><svg class="ic12"><use href="#chdl"/></svg></span><span class="ico tl-c"><svg class="ic20"><use href="#meshd"/></svg></span><span class="nm">刀</span></div>
          <div class="row l5"><span class="cv"></span><span class="ico tl-c"><svg class="ic18"><use href="#key"/></svg></span><span class="nm">Key</span></div>
          <div class="row l5 alt"><span class="cv"></span><span class="ico red"><svg class="ic18"><use href="#mtl"/></svg></span><span class="nm">武器</span></div>
          <div class="row l4"><span class="cv"><svg class="ic12"><use href="#chdl"/></svg></span><span class="ico blu"><svg class="ic20"><use href="#wrench"/></svg></span><span class="nm">Modifiers</span></div>
          <div class="row l5 alt"><span class="cv"></span><span class="ico blu box"><svg class="ic20"><use href="#armd"/></svg></span><span class="rt"><svg class="ic18"><use href="#eye"/></svg><svg class="ic18"><use href="#rcam"/></svg></span></div>
          <i class="tree t1"></i><i class="tree t2"></i><i class="tree t3"></i>
          <i class="oscroll"></i>
        </div>
      </section>

      <section class="props">
        <div class="phead">
          <span class="btn w40h"><svg class="ic20"><use href="#toggle"/></svg><svg class="ic10"><use href="#chd"/></svg></span>
          <span class="search ps"><svg class="ic18"><use href="#search"/></svg><em>Search</em></span>
          <span class="btn w24"><svg class="ic10"><use href="#chd"/></svg></span>
        </div>
        <div class="pbody">
          <div class="ptabs">
            <span class="ptab gr"><svg class="ic20"><use href="#tool"/></svg></span>
            <span class="ptab gr gap"><svg class="ic20"><use href="#rendert"/></svg></span>
            <span class="ptab gr"><svg class="ic20"><use href="#output"/></svg></span>
            <span class="ptab gr"><svg class="ic20"><use href="#vlayer"/></svg></span>
            <span class="ptab gr"><svg class="ic20"><use href="#scene"/></svg></span>
            <span class="ptab red"><svg class="ic20"><use href="#world"/></svg></span>
            <span class="ptab gr gap"><svg class="ic20"><use href="#colt"/></svg></span>
            <span class="ptab on or2 gap2"><svg class="ic20"><use href="#obj"/></svg></span>
            <span class="ptab blu"><svg class="ic20"><use href="#phys"/></svg></span>
            <span class="ptab blu"><svg class="ic20"><use href="#cons"/></svg></span>
            <span class="ptab tl-c"><svg class="ic20"><use href="#posed"/></svg></span>
            <span class="ptab tl-c"><svg class="ic20"><use href="#bone"/></svg></span>
            <span class="ptab blu"><svg class="ic20"><use href="#bcons"/></svg></span>
          </div>
          <div class="pcontent">
            <div class="ptitle"><svg class="ic18"><use href="#obj"/></svg><span>刀_arm</span><svg class="ic18 dim ptpin"><use href="#pin"/></svg></div>
            <div class="namefield"><span class="nf-ic"><svg class="ic18"><use href="#obj"/></svg><svg class="ic10"><use href="#chd"/></svg></span><span class="nf-t">刀_arm</span></div>

            <div class="panel">
              <div class="ph"><svg class="ic12"><use href="#chdl"/></svg><span>Transform</span><i class="grip"></i></div>
              <div class="pp">
                <div class="fg">
                  <div class="fr"><label>Location X</label><span class="num top">0 m</span><svg class="ic16"><use href="#lock"/></svg><i class="dot"></i></div>
                  <div class="fr"><label>Y</label><span class="num">0 m</span><svg class="ic16"><use href="#lock"/></svg><i class="dot"></i></div>
                  <div class="fr"><label>Z</label><span class="num bot">0 m</span><svg class="ic16"><use href="#lock"/></svg><i class="dot"></i></div>
                </div>
                <div class="fg">
                  <div class="fr"><label>Rotation X</label><span class="num top">0°</span><svg class="ic16"><use href="#lock"/></svg><i class="dot"></i></div>
                  <div class="fr"><label>Y</label><span class="num">0°</span><svg class="ic16"><use href="#lock"/></svg><i class="dot"></i></div>
                  <div class="fr"><label>Z</label><span class="num bot">0°</span><svg class="ic16"><use href="#lock"/></svg><i class="dot"></i></div>
                </div>
                <div class="fg">
                  <div class="fr"><label>Mode</label><span class="drop">XYZ Euler<svg class="ic10"><use href="#chd"/></svg></span><span></span><i class="dot"></i></div>
                </div>
                <div class="fg">
                  <div class="fr"><label>Scale X</label><span class="num top">1.000</span><svg class="ic16"><use href="#lock"/></svg><i class="dot"></i></div>
                  <div class="fr"><label>Y</label><span class="num">1.000</span><svg class="ic16"><use href="#lock"/></svg><i class="dot"></i></div>
                  <div class="fr"><label>Z</label><span class="num bot">1.000</span><svg class="ic16"><use href="#lock"/></svg><i class="dot"></i></div>
                </div>
                <div class="delta"><svg class="ic12"><use href="#chr"/></svg><span>Delta Transform</span></div>
              </div>
            </div>

            <div class="panel"><div class="ph cl"><svg class="ic12"><use href="#chr"/></svg><span>Relations</span><i class="grip"></i></div></div>
            <div class="panel"><div class="ph cl"><svg class="ic12"><use href="#chr"/></svg><span>Collections</span><i class="grip"></i></div></div>
            <div class="panel"><div class="ph cl"><svg class="ic12"><use href="#chr"/></svg><span>Motion Paths</span><i class="grip"></i></div></div>
            <div class="panel"><div class="ph cl"><svg class="ic12"><use href="#chr"/></svg><span>Visibility</span><i class="grip"></i></div></div>

            <div class="panel">
              <div class="ph"><svg class="ic12"><use href="#chdl"/></svg><span>MMD Model Information</span><i class="grip"></i></div>
              <div class="mmd">
                <div class="mr"><label>Name:</label><span class="tf">New MMD Model</span></div>
                <div class="mr"><label>Name (Engl...</label><span class="tf">New MMD Model</span></div>
                <div class="mr mt8"><label>Comment:</label><span class="tf ti"><svg class="ic18"><use href="#note"/></svg><span>刀</span><svg class="ic14 tfx"><use href="#xx"/></svg></span></div>
                <div class="mr"><label>Comment (...</label><span class="tf ti"><svg class="ic18"><use href="#note"/></svg><span>刀_e</span><svg class="ic14 tfx"><use href="#xx"/></svg></span></div>
                <div class="mb mt8">Change MMD IK Loop Factor</div>
                <div class="mb">Recalculate bone roll</div>
              </div>
            </div>

            <div class="panel"><div class="ph cl"><svg class="ic12"><use href="#chr"/></svg><span>Viewport Display</span><i class="grip"></i></div></div>
            <div class="panel"><div class="ph cl"><svg class="ic12"><use href="#chr"/></svg><span>Animation</span><i class="grip"></i></div></div>
          </div>
          <i class="pscroll"></i>
        </div>
      </section>
    </div>
  </div>
</div>
</body>
</html>
```

FILE: styles.css
```css
*{box-sizing:border-box}
html,body{margin:0;padding:0}
body{width:2560px;height:1361px;overflow:hidden;display:flex;flex-direction:column;background:#181818;color:#d6d6d6;font:14px/1 Inter,"Noto Sans CJK SC",sans-serif}
svg{flex:none;display:block}
i,em,b{font-style:normal;font-weight:400}
.sprite{position:absolute;width:0;height:0}

/* icon drawing primitives */
.s{fill:none;stroke:currentColor;stroke-width:1.5;stroke-linecap:round;stroke-linejoin:round}
.sth{fill:none;stroke:currentColor;stroke-width:2.4;stroke-linecap:round;stroke-linejoin:round}
.sth3{fill:none;stroke:currentColor;stroke-width:3.4;stroke-linecap:round;stroke-linejoin:round}
.s1{fill:none;stroke:#111;stroke-width:1}
.d2{stroke-dasharray:4 3}
.f{fill:currentColor;stroke:none}
.ff{fill:#282828;stroke:currentColor;stroke-width:1.5}
.fe{fill-rule:evenodd}
.cut{fill:#282828;stroke:none}
.cutb{fill:#4772b3;stroke:none}
.cutp{fill:#282828;stroke:none}
.o{fill:#e87d0d}
.w{fill:#fff}
.b{fill:#2a6fb5}
.ln{fill:none;stroke:#2b2b2b;stroke-width:1.5}
.sb{fill:none;stroke:currentColor;stroke-width:3;stroke-linecap:round}
.sd{fill:none;stroke:currentColor;stroke-width:2;stroke-dasharray:3 2.5}
.sdo{fill:none;stroke:#e8a33d;stroke-width:2;stroke-dasharray:4 3}
.sg{fill:none;stroke:#8a8a8a;stroke-width:2}
.fg{fill:#a8a8a8;stroke:none}
.rw{fill:none;stroke:#fff;stroke-width:2}
.rr{fill:none;stroke:#a8323c;stroke-width:2;stroke-dasharray:10 10.4}
.sgr{fill:none;stroke:#8fd6ae;stroke-width:1.8}
.fgr{fill:#95dcb4;stroke:none}
.wd{fill:#2c2c2c;stroke:none}

.ic10{width:10px;height:10px}
.ic12{width:12px;height:12px}
.ic14{width:14px;height:14px}
.ic16{width:16px;height:16px}
.ic18{width:18px;height:18px}
.ic20{width:20px;height:20px}
.ic22{width:22px;height:22px}
.ic30{width:30px;height:30px}
.dim{color:#777}
.dim2{color:#a6a6a6}
.grey{color:#b8b8b8}
.wht{color:#fff}
.flip{transform:scaleX(-1)}

/* window title */
.titlebar{height:29px;flex:none;background:#fff;display:flex;align-items:center;color:#111;padding-left:4px}
.ttl-logo{width:18px;height:18px;margin-right:6px}
.ttl-text{font:14.5px "Open Sans",sans-serif;color:#222}
.winctl{margin-left:auto;display:flex;padding-right:3px}
.wbtn{width:58.5px;height:29px;display:flex;align-items:center;justify-content:center}
.wmin{width:12px;height:1px;background:#111}
.wic{width:13px;height:13px}

.app{flex:1;display:flex;flex-direction:column;min-height:0;background:#181818}

/* top bar */
.topbar{height:34px;flex:none;display:flex;align-items:flex-start;padding-left:12px;color:#d0d0d0;font-size:13.5px}
.top-logo{margin-top:5px;color:#e6e6e6}
.topbar .cut{fill:#181818}
.topmenu{display:flex;gap:19.5px;margin-left:11px;padding-top:9px;width:280px}
.tabs{display:flex;margin-top:7px}
.tab{height:25px;padding:6px 12.75px 0;color:#8f8f8f;background:#1d1d1d;border-radius:5px 5px 0 0;white-space:nowrap}
.tab.on{background:#3d3d3d;color:#e6e6e6;padding:6px 13px 0}
.tab.hov{background:#2a2a2a;color:#cfcfcf}
.tab.plus{font-size:20px;padding:1px 5px 0;color:#8f8f8f}
.selectors{margin-left:auto;display:flex;gap:8px;padding:3px 10px 0 0;font-size:14px}
.sel{height:25px;display:flex;align-items:center;background:#282828;border:1px solid #3c3c3c;border-radius:5px}
.sel-scene{width:214px}
.sel-vl{width:188px}
.sel-ic{width:38px;display:flex;align-items:center;gap:1px;padding-left:4px;height:100%;background:#2b2b2b;border-right:1px solid #1d1d1d;border-radius:5px 0 0 5px}
.sel-name{flex:1;padding-left:9px;color:#dcdcdc;background:#1d1d1d;height:100%;display:flex;align-items:center}
.sel-pin{position:absolute;left:2274px}
.sel-b{width:25px;height:100%;background:#545454;display:flex;align-items:center;justify-content:center;color:#d8d8d8}
.sel-x{width:24px;height:100%;display:flex;align-items:center;justify-content:center;color:#4f4f4f;background:#2b2b2b;border-radius:0 5px 5px 0}

.workspace{flex:1;display:grid;grid-template-columns:2114px 443px;column-gap:3px;min-height:0}
.leftcol{display:flex;flex-direction:column;gap:4px;min-height:0}
.rightcol{display:flex;flex-direction:column;gap:5px;min-height:0}

/* viewport */
.viewport{position:relative;height:1196px;flex:none;background:#404040;border-radius:8px;overflow:hidden}
.scene3d{position:absolute;left:0;top:0;width:2114px;height:1196px}
.vhead{position:relative;height:33px;background:#3a3a3a;display:grid;grid-template-columns:937px 213px 1fr;padding-top:4px}
.vh-left,.vh-center,.vh-right{display:flex;gap:8px;align-items:flex-start}
.vh-left{padding-left:12px}
.vh-right{justify-content:flex-end;padding-right:9px}
.btn{height:24px;display:inline-flex;align-items:center;justify-content:center;background:#282828;border-radius:5px;box-shadow:0 0 0 1px #2f2f2f;color:#d8d8d8;overflow:hidden;flex:none}
.btxt{color:#dedede}
.w38{width:38px;gap:1px}
.w39{width:39px;gap:1px}
.w40h{width:40px;gap:1px}
.w22{width:22px}
.w24{width:24px}
.wmode{width:125px;gap:9px}
.wmode .btxt{margin-left:1px}
.wglob{width:96px;gap:9px}
.wprop{width:39px;gap:1px}
.wsnap{width:63px;justify-content:flex-start}
.wgz{width:48px;justify-content:flex-start}
.wov{width:89px;justify-content:flex-start}
.wshade{width:120px;justify-content:flex-start}
.wpose{width:116px;gap:7px;padding-left:5px}
.off{background:#393939;color:#4e4e4e}
.seg{height:100%;display:flex;align-items:center;justify-content:center;flex:none;gap:1px}
.seg.lit{background:#545454}
.seg.act{background:#4772b3;color:#fff}
.seg.bl{border-left:1px solid #3a3a3a}
.w23{width:23px}
.w24.seg{width:24px}
.w25{width:25px}
.w40{width:40px}
.w41{width:41px}
.w93{width:93px}
.w76{width:76px}
.seg.tx{gap:8px;color:#d0d0d0;font-size:13.5px}
.menu{display:flex;gap:20px;padding:4px 0 0 8px;color:#cfcfcf;font-size:13.5px}

.vtool{position:relative;height:30px;display:flex;justify-content:space-between}
.vt-left,.vt-right{background:#3a3a3a;display:flex;align-items:flex-start;padding-top:3px}
.vt-left{width:141px;padding-left:11px;border-bottom-right-radius:8px}
.vt-right{width:189px;padding-left:12px;border-bottom-left-radius:8px}
.modes{display:flex;height:23px;border-radius:4px;overflow:hidden;background:#545454;gap:1px}
.m{width:23.2px;background:#545454;display:flex;align-items:center;justify-content:center;color:#c4c4c4}
.m.act{background:#4772b3;color:#fff}
.mir{margin-right:3px;margin-top:2px}
.xbtn{width:21px;height:23px;background:#545454;border-radius:4px;text-align:center;line-height:23px;color:#ddd;margin-right:8px}

.toolbar{position:absolute;left:11px;top:74px;display:flex;flex-direction:column;gap:8px}
.tg{width:48px;border-radius:5px;overflow:hidden;background:#282828;box-shadow:0 2px 0 #333}
.tl{position:relative;height:42.5px;display:flex;align-items:center;justify-content:center;color:#dcdcdc;border-bottom:1px solid #3d3d3d}
.tl:last-child{border-bottom:0}
.tl.act{background:#4772b3;color:#fff}
.tl.more::after{content:"";position:absolute;right:2px;bottom:2px;border:3px solid transparent;border-right-color:#b8b8b8;border-bottom-color:#b8b8b8}
.vinfo{position:absolute;left:81px;top:76px;display:flex;flex-direction:column;gap:8px;color:#f2f2f2;text-shadow:1px 1px 1px rgba(0,0,0,.7)}
.sidearrow{position:absolute;left:2104px;top:82px;width:10px;height:17px;background:#383838;border-radius:4px 0 0 4px;color:#aaa;transform:scaleX(-1);display:flex;align-items:center}
.navbtns{position:absolute;left:2069px;top:177px;display:flex;flex-direction:column;gap:3.4px}
.nav{width:34px;height:34px;border-radius:50%;background:#2e2e2e;display:flex;align-items:center;justify-content:center;color:#e4e4e4}

/* 3d scene */
.ax-g{fill:none;stroke:#46582f;stroke-width:1.2}
.ax-k{fill:none;stroke:#1a1a1a;stroke-width:1.2}
.ax-r{fill:none;stroke:url(#redax);stroke-width:1.4}
.ax-v{fill:none;stroke:#0e0e0e;stroke-width:1.2}
.z7{transform:translate(340px,400px) scale(.5102,.33333)}
.z8{transform:translate(1100px,440px) scale(.40816,.33333)}
.pk{fill:#e29edc;stroke:#dd92d7;stroke-width:.8;vector-effect:non-scaling-stroke}
.pk-b{fill:#e29edc}
.pk-g{fill:url(#grip)}
.pk-t{fill:url(#gtop)}
.pk-c{fill:url(#can)}
.gripc{fill:#e49fde}
.ring2{fill:#cf78ca}
.lt{fill:#e6a9e3}
.dk{fill:#d98dd4}
.dk3{fill:#dc96d7}
.ln7{fill:none;stroke:#d98dd4;stroke-width:1;vector-effect:non-scaling-stroke}
.wire{fill:none;stroke:#e29edc;stroke-width:3;vector-effect:non-scaling-stroke}
.edge{fill:none;stroke:#d67fd0;stroke-width:1;vector-effect:non-scaling-stroke}
.str-l{fill:none;stroke:#e7ade5;stroke-width:3;vector-effect:non-scaling-stroke}
.str-d{fill:none;stroke:#d27ccc;stroke-width:3;vector-effect:non-scaling-stroke}
.str-d2{fill:none;stroke:#d27ccc;stroke-width:3.4;vector-effect:non-scaling-stroke}
.bs{fill:#7c7c7c}
.bs2{fill:#7a7a7a;stroke:#1d1d1d;stroke-width:1;vector-effect:non-scaling-stroke}
.bo{fill:rgba(128,128,128,.42);stroke:#222;stroke-width:1;vector-effect:non-scaling-stroke}
.jt{fill:rgba(110,110,110,.45);stroke:#2a2a2a;stroke-width:1;vector-effect:non-scaling-stroke}
.cy{fill:none;stroke:#63e6f5;stroke-width:1;vector-effect:non-scaling-stroke}
.cur-w{fill:none;stroke:#fff;stroke-width:1.5}
.cur-r{fill:none;stroke:#d3202a;stroke-width:1.5;stroke-dasharray:10 9.63}
.cur-o{fill:#f29a1f}
.gl-b{stroke:#2b77d1;stroke-width:2}
.gl-g{stroke:#76ad14;stroke-width:2}
.g-z{fill:#2e7fd9}
.g-y{fill:#78b011}
.g-x{fill:#f12c50}
.g-nx{fill:none;stroke:#a33249;stroke-width:1.5}
.g-ny{fill:#5c6b37;stroke:#78b011;stroke-width:1.5}
.g-nz{fill:#38557c;stroke:#2e7fd9;stroke-width:1.5}
.gt{font:700 13px Inter,sans-serif;text-anchor:middle;fill:#14202e}

/* timeline */
.timeline{position:relative;flex:1;background:#1d1d1d;border-radius:8px 8px 0 0;overflow:hidden}
.thead{height:31px;background:#363636;display:flex;align-items:center;padding-left:11px}
.thead .cut,.thead .cutp{fill:#282828}
.wplay{width:169px;margin-left:7px;justify-content:flex-start}
.tmenu{padding:0 0 0 11px;gap:22px;width:118px}
.wauto{width:49px;margin-left:598px;justify-content:flex-start;color:#aaa}
.wauto .seg.lit{color:#aaa}
.trans{display:flex;margin-left:8px;height:24px;background:#545454;border-radius:5px;overflow:hidden;gap:1px}
.trans span{width:23.7px;display:flex;align-items:center;justify-content:center;color:#e8e8e8}
.frame{width:91px;height:24px;margin-left:619px;background:#545454;border-radius:5px;text-align:center;line-height:24px;color:#ddd}
.range{display:flex;width:242px;margin-left:7px;height:24px;border-radius:5px;overflow:hidden;gap:1px;background:#3a3a3a}
.rg-w{width:24px;background:#2d2d2d;display:flex;align-items:center;justify-content:center;color:#ddd}
.rg{display:flex;justify-content:space-between;align-items:center;background:#545454;color:#ddd}
.rg-s{width:112px;padding:0 17px 0 20px}
.rg-e{width:104px;padding:0 17px 0 18px}
.ruler{position:relative;height:29px;background:#1d1d1d;display:flex;padding-left:109.7px;padding-top:8px;color:#b4b4b4}
.ruler span{flex:none;width:78.6px;text-align:center}
.curframe{position:absolute;left:64px;top:4px;width:29px;height:22px;border-radius:5px;background:#4772b3;color:#fff;text-align:center;line-height:21px}
.tracks{height:24px;background:linear-gradient(90deg,#1e1e1e 1px,transparent 1px) 70.4px 0/78.6px 100%,linear-gradient(90deg,#232323 1px,transparent 1px) 31.1px 0/78.6px 100%,linear-gradient(90deg,#272727 0 78px,#2c2c2c 78px 2036px,#272727 2036px)}
.hscroll{height:11px;margin:0 9px 0 11px;background:#555;border-radius:6px;display:flex;justify-content:space-between;padding:0 1px}
.hscroll i{width:9px;height:11px;border-radius:50%;background:#3d3d3d;border:1px solid #888}
.tbottom{height:3px;background:#1d1d1d}
.playline{position:absolute;left:78px;top:57px;width:1px;height:42px;background:#4772b3}
.t-arrow-l,.t-arrow-r{position:absolute;top:54px;color:#888}
.t-arrow-l{left:-2px}
.t-arrow-r{left:2104px}

/* outliner */
.outliner{height:415px;flex:none;background:#282828;border-radius:8px;border-bottom:1px solid #3a3a3a;overflow:hidden;display:flex;flex-direction:column}
.ohead{height:33px;flex:none;display:flex;align-items:flex-start;padding:4px 0 0 11px;gap:7px;background:#2d2d2d}
.search{height:24px;background:#1d1d1d;border-radius:5px;display:flex;align-items:center;color:#d8d8d8;box-shadow:0 0 0 1px #333}
.search em{color:#666;margin-left:3px}
.os{width:148px;margin-left:30px;padding-left:4px}
.ofilter{margin-left:73px}
.btn-lit{width:24px;height:24px;background:#545454;border-radius:5px;display:flex;align-items:center;justify-content:center;color:#b8b8b8;margin-left:1px}
.rows{position:relative;flex:1;overflow:hidden}
.row{position:relative;height:25px;display:flex;align-items:center;padding:0 16px 0 24.5px;color:#bcbcbc;background:#282828}
.row.alt{background:#2b2b2b}
.l1{padding-left:49.5px}
.l2{padding-left:74.5px}
.l3{padding-left:99.5px}
.l4{padding-left:124.5px}
.l5{padding-left:149.5px}
.cv{width:25px;height:25px;flex:none;display:flex;align-items:center;justify-content:center;color:#a8a8a8}
.ico{width:25px;height:25px;flex:none;display:flex;align-items:center;justify-content:center;color:#d8d8d8}
.nm{margin-left:5px;white-space:nowrap}
.box>svg{position:relative}
.ico.box::before,.sub.box::before{content:"";position:absolute;width:23px;height:23px;background:#505050;border-radius:5px}
.sub{position:relative;width:25px;height:25px;flex:none;display:flex;align-items:center;justify-content:center}
.boxb::before{background:#54699a !important}
.or{color:#c87a3a}
.fade{opacity:.6}
.tl-c{color:#10b48c}
.red{color:#b5525f}
.blu{color:#4e7bc9}
.grey2{color:#6f6f6f}
.grey3{color:#8a8a8a}
.orange{color:#f0a22c}
.whitey{color:#f0f0f0}
.rt{margin-left:auto;display:flex;gap:7px;align-items:center;color:#dcdcdc}
.rt svg:last-child{color:#d0d0d0}
.sub-cam{margin-left:26px}
.sub-light{margin-left:23px}
.sub-pose{margin-left:22px}
.sub-bones{margin-left:25px}
.cnt{position:absolute;right:-2px;bottom:0;font-size:11px;color:#e8e8e8}
.sel-row{background:#334d80;color:#fff}
.modeic{position:absolute;left:2px;top:3px;color:#d8d8d8}
.tree{position:absolute;width:1px;bottom:0}
.t1{left:37px;top:50px;background:#5a5a5a}
.t2{left:61px;top:125px;background:repeating-linear-gradient(#5a5a5a 0 8px,transparent 8px 14px)}
.t3{left:86px;top:200px;background:repeating-linear-gradient(#5a5a5a 0 8px,transparent 8px 14px)}
.oscroll{position:absolute;right:3px;top:0;width:4px;height:203px;background:#454545;border-radius:2px}

/* properties */
.props{flex:1;background:#343434;border-radius:8px 8px 0 0;overflow:hidden;display:flex;flex-direction:column;min-height:0}
.phead{height:29px;flex:none;background:#3a3a3a;display:flex;align-items:flex-start;padding:2px 0 0 10px}
.ps{width:146px;margin-left:99px;padding-left:4px}
.phead .w24{margin-left:112px}
.pbody{position:relative;flex:1;display:flex;min-height:0}
.ptabs{width:35px;flex:none;background:#1d1d1d;padding-top:11.5px;display:flex;flex-direction:column}
.ptab{height:35px;flex:none;display:flex;align-items:center;justify-content:center}
.ptab.gap{margin-top:8px}
.ptab.gap2{margin-top:10px}
.ptab.gr{color:#a8a8a8}
.ptab.on{background:#3d3d3d;border-radius:5px 0 0 5px;margin-left:2px}
.or2{color:#e8975a}
.pcontent{flex:1;padding:0 10px;display:flex;flex-direction:column;gap:2px;overflow:hidden;min-width:0}
.ptitle{height:46px;flex:none;display:flex;align-items:center;gap:13px;padding-left:2px;color:#c8c8c8;margin-bottom:8px}
.ptitle svg:first-child{color:#ddd}
.ptpin{margin-left:auto;margin-right:4px}
.namefield{height:24px;flex:none;display:flex;background:#1d1d1d;border-radius:5px;box-shadow:0 0 0 1px #2d2d2d;margin-bottom:11px;margin-right:1px}
.nf-ic{width:40px;background:#2d2d2d;border-radius:5px 0 0 5px;border-right:1px solid #444;display:flex;align-items:center;gap:1px;padding-left:3px;color:#ddd}
.nf-t{padding-left:9px;line-height:23px;color:#d6d6d6}
.panel{flex:none;background:#3e3e3e;border-radius:6px}
.ph{height:32px;display:flex;align-items:center;color:#d0d0d0;padding:0 10px;position:relative}
.ph.cl{height:31px}
.ph svg{margin-right:5px;color:#b8b8b8}
.grip{position:absolute;right:9px;top:50%;width:14px;height:6px;margin-top:-3px;background:repeating-linear-gradient(90deg,#aaa 0 2px,transparent 2px 4px);-webkit-mask:repeating-linear-gradient(#000 0 2px,transparent 2px 4px);mask:repeating-linear-gradient(#000 0 2px,transparent 2px 4px)}
.pp{padding-top:10px;display:flex;flex-direction:column;gap:7px}
.fg{display:flex;flex-direction:column;gap:1px}
.fr{display:grid;grid-template-columns:142px 185px 26px 24px;align-items:center;height:24px}
.fr label{text-align:right;color:#c9c9c9}
.fr span{margin-left:12px;width:173px}
.fr svg{margin-left:5px;color:#e0e0e0}
.num{height:24px;background:#545454;text-align:center;line-height:23px;color:#dedede;box-shadow:0 1px 0 #333}
.num.top{border-radius:5px 0 0 0}
.num.bot{border-radius:0 0 0 5px}
.drop{height:24px;background:#282828;border-radius:5px;display:flex;align-items:center;justify-content:space-between;padding:0 3px 0 9px;color:#e0e0e0}
.dot{width:6px;height:6px;border-radius:50%;background:#d6d6d6;justify-self:center}
.delta{height:26px;margin-top:6px;padding-left:27px;margin-bottom:2px;display:flex;align-items:center;gap:5px;color:#cfcfcf}
.delta svg{color:#b8b8b8}
.mmd{padding:10px 11px 11px;display:flex;flex-direction:column;gap:4px}
.mr{display:grid;grid-template-columns:91px 275px;height:23px;align-items:center}
.mr label{color:#c9c9c9;white-space:nowrap}
.tf{height:23px;background:#1d1d1d;border-radius:5px;line-height:22px;padding-left:9px;color:#d8d8d8;display:flex;align-items:center}
.tf.ti{padding-left:5px;gap:6px;color:#d8d8d8}
.tfx{margin-left:auto;margin-right:6px;color:#c4c4c4}
.mt8{margin-top:4px}
.mb{height:23px;background:#555;border-radius:5px;text-align:center;line-height:22px;color:#d8d8d8}
.pscroll{position:absolute;right:2px;top:2px;width:4px;height:788px;background:#4a4a4a;border-radius:2px}
```
